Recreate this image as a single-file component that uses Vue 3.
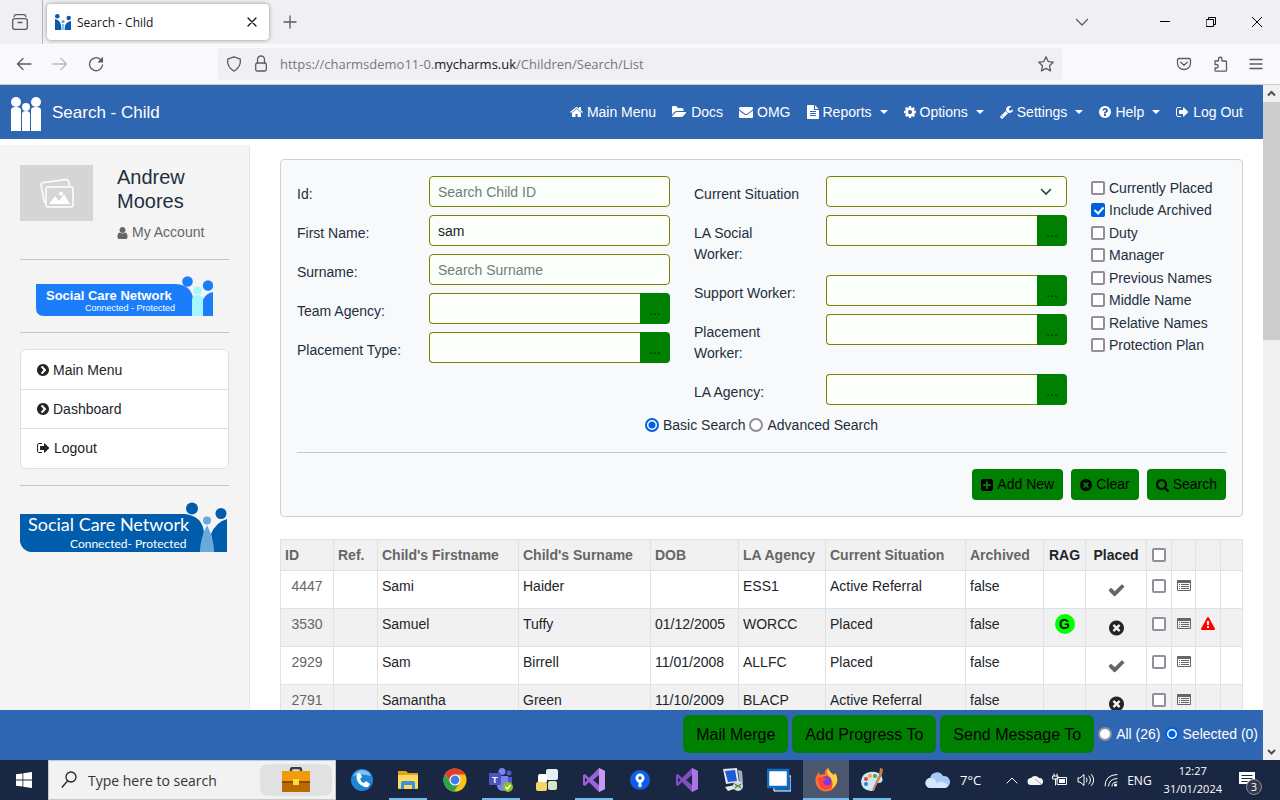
<script setup>
import { h, ref } from 'vue'

const disc = 'm387-226q0 209-103 385.5t-279.5 279.5-385.5 103-385.5-103-279.5-279.5-103-385.5 103-385.5 279.5-279.5 385.5-103 385.5 103 279.5 279.5 103 385.5z'

// name: [left edge, width, path] on a 1792-unit high grid
const glyphs = {
  home: [64, 1664, 'M1472 992v480q0 26-19 45t-45 19h-384v-384h-256v384h-384q-26 0-45-19t-19-45v-480q0-1 .5-3t.5-3l575-474 575 474q1 2 1 6zm223-69l-62 74q-8 9-21 11h-3q-13 0-21-7l-692-577-692 577q-12 8-24 7-13-2-21-11l-62-74q-8-10-7-23.5t11-21.5l719-599q32-26 76-26t76 26l244 204v-195q0-14 9-23t23-9h192q14 0 23 9t9 23v408l219 182q10 8 11 21.5t-7 23.5z'],
  folder: [0, 1920, 'M1815 952q0 31-31 66l-336 396q-43 51-120.5 86.5t-143.5 35.5h-1088q-34 0-60.5-13t-26.5-43q0-31 31-66l336-396q43-51 120.5-86.5t143.5-35.5h1088q34 0 60.5 13t26.5 43zm-343-344v160h-832q-94 0-197 47.5t-164 119.5l-337 396-5 6q0-4-.5-12.5t-.5-12.5v-960q0-92 66-158t158-66h320q92 0 158 66t66 158v32h544q92 0 158 66t66 158z'],
  envelope: [0, 1792, 'M1792 710v794q0 66-47 113t-113 47h-1472q-66 0-113-47t-47-113v-794q44 49 101 87 362 246 497 345 57 42 92.5 65.5t94.5 48 110 24.5h2q51 0 110-24.5t94.5-48 92.5-65.5q170-123 498-345 57-39 100-87zm0-294q0 79-49 151t-122 123q-376 261-468 325-10 7-42.5 31t-54 38.5-52 32.5-57.5 27-50 9h-2q-23 0-50-9t-57.5-27-52-32.5-54-38.5-42.5-31q-91-64-262-182.5t-205-142.5q-62-42-117-115.5t-55-136.5q0-78 41.5-130t118.5-52h1472q65 0 112.5 47t47.5 113z'],
  file: [128, 1536, 'M1596 476q14 14 28 36h-472v-472q22 14 36 28zm-476 164h544v1056q0 40-28 68t-68 28h-1344q-40 0-68-28t-28-68v-1600q0-40 28-68t68-28h800v544q0 40 28 68t68 28zm160 736v-64q0-14-9-23t-23-9h-704q-14 0-23 9t-9 23v64q0 14 9 23t23 9h704q14 0 23-9t9-23zm0-256v-64q0-14-9-23t-23-9h-704q-14 0-23 9t-9 23v64q0 14 9 23t23 9h704q14 0 23-9t9-23zm0-256v-64q0-14-9-23t-23-9h-704q-14 0-23 9t-9 23v64q0 14 9 23t23 9h704q14 0 23-9t9-23z'],
  cog: [128, 1536, 'M1152 896q0-106-75-181t-181-75-181 75-75 181 75 181 181 75 181-75 75-181zm512-109v222q0 12-8 23t-20 13l-185 28q-19 54-39 91 35 50 107 138 10 12 10 25t-9 23q-27 37-99 108t-94 71q-12 0-26-9l-138-108q-44 23-91 38-16 136-29 186-7 28-36 28h-222q-14 0-24.5-8.5t-11.5-21.5l-28-184q-49-16-90-37l-141 107q-10 9-25 9-14 0-25-11-126-114-165-168-7-10-7-23 0-12 8-23 15-21 51-66.5t54-70.5q-27-50-41-99l-183-27q-13-2-21-12.5t-8-23.5v-222q0-12 8-23t19-13l186-28q14-46 39-92-40-57-107-138-10-12-10-24 0-10 9-23 26-36 98.5-107.5t94.5-71.5q13 0 26 10l138 107q44-23 91-38 16-136 29-186 7-28 36-28h222q14 0 24.5 8.5t11.5 21.5l28 184q49 16 90 37l142-107q9-9 24-9 13 0 25 10 129 119 165 170 7 8 7 22 0 12-8 23-15 21-51 66.5t-54 70.5q26 50 41 98l183 28q13 2 21 12.5t8 23.5z'],
  wrench: [64, 1664, 'M448 1472q0-26-19-45t-45-19-45 19-19 45 19 45 45 19 45-19 19-45zm644-420l-682 682q-37 37-90 37-52 0-91-37l-106-108q-38-36-38-90 0-53 38-91l681-681q39 98 114.5 173.5t173.5 114.5zm634-435q0 39-23 106-47 134-164.5 217.5t-258.5 83.5q-185 0-316.5-131.5t-131.5-316.5 131.5-316.5 316.5-131.5q58 0 121.5 16.5t107.5 46.5q16 11 16 28t-16 28l-293 169v224l193 107q5-3 79-48.5t135.5-81 70.5-35.5q15 0 23.5 10t8.5 25z'],
  question: [128, 1536, 'M1024 1376v-192q0-14-9-23t-23-9h-192q-14 0-23 9t-9 23v192q0 14 9 23t23 9h192q14 0 23-9t9-23zm256-672q0-88-55.5-163t-138.5-116-170-41q-243 0-371 213-15 24 8 42l132 100q7 6 19 6 16 0 25-12 53-68 86-92 34-24 86-24 48 0 85.5 26t37.5 59q0 38-20 61t-68 45q-63 28-115.5 86.5t-52.5 125.5v36q0 14 9 23t23 9h192q14 0 23-9t9-23q0-19 21.5-49.5t54.5-49.5q32-18 49-28.5t46-35 44.5-48 28-60.5 12.5-81zm384 192q0 209-103 385.5t-279.5 279.5-385.5 103-385.5-103-279.5-279.5-103-385.5 103-385.5 279.5-279.5 385.5-103 385.5 103 279.5 279.5 103 385.5z'],
  signout: [64, 1664, 'M704 1440q0 4 1 20t.5 26.5-3 23.5-10 19.5-20.5 6.5h-320q-119 0-203.5-84.5t-84.5-203.5v-704q0-119 84.5-203.5t203.5-84.5h320q13 0 22.5 9.5t9.5 22.5q0 4 1 20t.5 26.5-3 23.5-10 19.5-20.5 6.5h-320q-66 0-113 47t-47 113v704q0 66 47 113t113 47h312l11.5 1 11.5 3 8 5.5 7 9 2 13.5zm928-544q0 26-19 45l-544 544q-19 19-45 19t-45-19-19-45v-288h-448q-26 0-45-19t-19-45v-384q0-26 19-45t45-19h448v-288q0-26 19-45t45-19 45 19l544 544q19 19 19 45z'],
  chevron: [128, 1536, 'M845 1395l454-454q19-19 19-45t-19-45l-454-454q-19-19-45-19t-45 19l-102 102q-19 19-19 45t19 45l307 307-307 307q-19 19-19 45t19 45l102 102q19 19 45 19t45-19zm819-499q0 209-103 385.5t-279.5 279.5-385.5 103-385.5-103-279.5-279.5-103-385.5 103-385.5 279.5-279.5 385.5-103 385.5 103 279.5 279.5 103 385.5z'],
  cross: [128, 1536, 'M1277 1122q0-26-19-45l-181-181 181-181q19-19 19-45 0-27-19-46l-90-90q-19-19-46-19-26 0-45 19l-181 181-181-181q-19-19-45-19-27 0-46 19l-90 90q-19 19-19 46 0 26 19 45l181 181-181 181q-19 19-19 45 0 27 19 46l90 90q19 19 46 19 26 0 45-19l181-181 181 181q19 19 45 19 27 0 46-19l90-90q19-19 19-46z' + disc],
  check: [64, 1664, 'M1671 566q0 40-28 68l-724 724-136 136q-28 28-68 28t-68-28l-136-136-362-362q-28-28-28-68t28-68l136-136q28-28 68-28t68 28l294 295 656-657q28-28 68-28t68 28l136 136q28 28 28 68z'],
  search: [64, 1664, 'M1216 832q0-185-131.5-316.5t-316.5-131.5-316.5 131.5-131.5 316.5 131.5 316.5 316.5 131.5 316.5-131.5 131.5-316.5zm512 832q0 52-38 90t-90 38q-54 0-90-38l-343-342q-179 124-399 124-143 0-273.5-55.5t-225-150-150-225-55.5-273.5 55.5-273.5 150-225 225-150 273.5-55.5 273.5 55.5 225 150 150 225 55.5 273.5q0 220-124 399l343 343q37 37 37 90z'],
  plus: [128, 1536, 'M1408 960v-128q0-26-19-45t-45-19h-320v-320q0-26-19-45t-45-19h-128q-26 0-45 19t-19 45v320h-320q-26 0-45 19t-19 45v128q0 26 19 45t45 19h320v320q0 26 19 45t45 19h128q26 0 45-19t19-45v-320h320q26 0 45-19t19-45zm256-544v960q0 119-84.5 203.5t-203.5 84.5h-960q-119 0-203.5-84.5t-84.5-203.5v-960q0-119 84.5-203.5t203.5-84.5h960q119 0 203.5 84.5t84.5 203.5z'],
  user: [192, 1408, 'M1536 1399q0 109-62.5 187t-150.5 78h-854q-88 0-150.5-78t-62.5-187q0-85 8.5-160.5t31.5-152 58.5-131 94-89 134.5-34.5q131 128 313 128t313-128q76 0 134.5 34.5t94 89 58.5 131 31.5 152 8.5 160.5zm-256-887q0 159-112.5 271.5t-271.5 112.5-271.5-112.5-112.5-271.5 112.5-271.5 271.5-112.5 271.5 112.5 112.5 271.5z'],
  warning: [0, 1792, 'M1024 1375v-190q0-14-9.5-23.5t-22.5-9.5h-192q-13 0-22.5 9.5t-9.5 23.5v190q0 14 9.5 23.5t22.5 9.5h192q13 0 22.5-9.5t9.5-23.5zm-2-374l18-459q0-12-10-19-13-11-24-11h-220q-11 0-24 11-10 7-10 21l17 457q0 10 10 16.5t24 6.5h185q14 0 23.5-6.5t10.5-16.5zm-14-934l768 1408q35 63-2 126-17 29-46.5 46t-63.5 17h-1536q-34 0-63.5-17t-46.5-46q-37-63-2-126l768-1408q17-31 47-49t65-18 65 18 47 49z'],
  list: [0, 1792, 'M128 128h1536q128 0 128 128v1152q0 128-128 128h-1536q-128 0-128-128v-1152q0-128 128-128zM128 512v896h1536v-896zM256 640h128v128h-128zM512 640h1024v128h-1024zM256 896h128v128h-128zM512 896h1024v128h-1024zM256 1152h128v128h-128zM512 1152h1024v128h-1024z'],
}

const Icon = (props) => {
  const [x, w, d] = glyphs[props.name]
  const size = props.size || 14
  return h('svg', {
    viewBox: `${x} 0 ${w} 1792`,
    width: Math.round((w / 1792) * size),
    height: size,
    fill: 'currentColor',
    'fill-rule': props.name === 'list' ? 'evenodd' : 'nonzero',
    'aria-hidden': 'true',
  }, [h('path', { d })])
}
Icon.props = ['name', 'size']

const nav = [
  { icon: 'home', text: 'Main Menu' },
  { icon: 'folder', text: 'Docs' },
  { icon: 'envelope', text: 'OMG' },
  { icon: 'file', text: 'Reports', menu: true },
  { icon: 'cog', text: 'Options', menu: true },
  { icon: 'wrench', text: 'Settings', menu: true },
  { icon: 'question', text: 'Help', menu: true },
  { icon: 'signout', text: 'Log Out' },
]

const side = [
  { icon: 'chevron', text: 'Main Menu' },
  { icon: 'chevron', text: 'Dashboard' },
  { icon: 'signout', text: 'Logout' },
]

const leftFields = ref([
  { id: 'child-id', label: 'Id:', type: 'text', hint: 'Search Child ID', value: '' },
  { id: 'first-name', label: 'First Name:', type: 'text', hint: '', value: 'sam' },
  { id: 'surname', label: 'Surname:', type: 'text', hint: 'Search Surname', value: '' },
  { id: 'team-agency', label: 'Team Agency:', type: 'pick', value: '' },
  { id: 'placement-type', label: 'Placement Type:', type: 'pick', value: '' },
])
const rightFields = ref([
  { id: 'situation', label: 'Current Situation', type: 'select', value: '' },
  { id: 'la-social', label: 'LA Social Worker:', type: 'pick', value: '' },
  { id: 'support', label: 'Support Worker:', type: 'pick', value: '' },
  { id: 'placement', label: 'Placement Worker:', type: 'pick', value: '' },
  { id: 'la-agency', label: 'LA Agency:', type: 'pick', value: '' },
])
const columns = [leftFields, rightFields]

const flags = ref([
  { text: 'Currently Placed', on: false },
  { text: 'Include Archived', on: true },
  { text: 'Duty', on: false },
  { text: 'Manager', on: false },
  { text: 'Previous Names', on: false },
  { text: 'Middle Name', on: false },
  { text: 'Relative Names', on: false },
  { text: 'Protection Plan', on: false },
])
const mode = ref('basic')
const scope = ref('selected')

const heads = ['ID', 'Ref.', "Child's Firstname", "Child's Surname", 'DOB', 'LA Agency', 'Current Situation', 'Archived']
const rows = [
  { id: 4447, first: 'Sami', last: 'Haider', dob: '', la: 'ESS1', sit: 'Active Referral', rag: '', placed: true, warn: false },
  { id: 3530, first: 'Samuel', last: 'Tuffy', dob: '01/12/2005', la: 'WORCC', sit: 'Placed', rag: 'G', placed: false, warn: true },
  { id: 2929, first: 'Sam', last: 'Birrell', dob: '11/01/2008', la: 'ALLFC', sit: 'Placed', rag: '', placed: true, warn: false },
  { id: 2791, first: 'Samantha', last: 'Green', dob: '11/10/2009', la: 'BLACP', sit: 'Active Referral', rag: '', placed: false, warn: false },
]
</script>

<template>
  <div class="window">
    <header class="tabs">
      <button class="plain recent" aria-label="Recent browsing">
        <svg width="18" height="18" viewBox="0 0 18 18" class="line"><rect x="1.700" y="5.700" width="14.600" height="10.600" rx="2" /><path d="M3 3.700Q3.500 1.700 5 1.700h8q1.500 0 2 2M7 9.500h4" /></svg>
      </button>
      <div class="tab">
        <svg width="16" height="16" viewBox="0 0 16 16" fill="#0a5cab"><circle cx="2.300" cy="2.300" r="2.300" /><circle cx="13.700" cy="4" r="2.200" /><path d="M0 16V5q5 1 6 6v5zM16 16V7q-5 1-6 5v4z" /><circle cx="8" cy="7.500" r="1.600" fill="#58a6dc" /><path d="M6 16l1-6h2l1 6z" fill="#8cc4ec" /></svg>
        <span class="tab-title">Search - Child</span>
        <button class="plain" aria-label="Close tab"><svg width="10" height="10" viewBox="0 0 10 10" class="line dark"><path d="M1 1l8 8M9 1l-8 8" /></svg></button>
      </div>
      <button class="plain new-tab" aria-label="New tab"><svg width="14" height="14" viewBox="0 0 14 14" class="line"><path d="M7 1v12M1 7h12" /></svg></button>
      <div class="window-buttons">
        <button class="plain" aria-label="List tabs"><svg width="14" height="14" viewBox="0 0 14 14" class="line"><path d="M1.500 4.500L7 10l5.500-5.500" /></svg></button>
        <button class="plain gap" aria-label="Minimise"><svg width="10" height="10" viewBox="0 0 10 10" class="line black"><path d="M0 4.500h10" /></svg></button>
        <button class="plain" aria-label="Restore"><svg width="10" height="10" viewBox="0 0 10 10" class="line black"><path d="M.5 2.500h7v7h-7zM2.500 2.500v-2h7v7h-2" /></svg></button>
        <button class="plain" aria-label="Close window"><svg width="10" height="10" viewBox="0 0 10 10" class="line black"><path d="M0 0l10 10M10 0L0 10" /></svg></button>
      </div>
    </header>

    <div class="toolbar">
      <div class="history">
        <button class="plain" aria-label="Back"><svg width="16" height="16" viewBox="0 0 16 16" class="line"><path d="M15 8H1.500M7 2.500L1.500 8 7 13.500" /></svg></button>
        <button class="plain faded" aria-label="Forward"><svg width="16" height="16" viewBox="0 0 16 16" class="line"><path d="M1 8h13.500M9 2.500L14.500 8 9 13.500" /></svg></button>
        <button class="plain" aria-label="Reload"><svg width="16" height="16" viewBox="0 0 16 16" class="line"><path d="M14.500 9A6.500 6.500 0 1 1 12.500 3.500" /><path d="M15 .8v5.700H9.300z" fill="#5b5b66" stroke="none" /></svg></button>
      </div>
      <div class="address">
        <svg width="16" height="16" viewBox="0 0 16 16" class="line"><path d="M8 .8l6.300 2.400q1 7.800-6.300 12Q.7 11 1.700 3.200z" /></svg>
        <svg width="14" height="18" viewBox="0 0 14 18" class="line"><rect x="1.700" y="8" width="10.600" height="8" rx="1.500" /><path d="M3.500 8V4.500a3.500 3.500 0 0 1 7 0V8" /></svg>
        <span class="url">https://charmsdemo11-0.<b>mycharms.uk</b>/Children/Search/List</span>
        <svg width="16" height="16" viewBox="0 0 16 16" class="line"><path d="M8 .8l2.200 4.800 5 .6-3.700 3.500 1 5.200L8 12.400l-4.500 2.500 1-5.200L.8 6.200l5-.6z" /></svg>
      </div>
      <div class="extras">
        <button class="plain" aria-label="Pocket"><svg width="16" height="16" viewBox="0 0 16 16" class="line"><path d="M3 2.500h10q1.500 0 1.500 1.500v3.500a6.500 6 0 0 1-13 0V4q0-1.500 1.500-1.500zM4.700 6.200L8 9.300l3.300-3.100" /></svg></button>
        <button class="plain" aria-label="Extensions"><svg width="16" height="16" viewBox="0 0 16 16" class="line"><path d="M2 5h3.500V3a1.700 1.700 0 0 1 3.500 0v2h3.500q1 0 1 1v8.500q0 .7-1 .7H3q-1 0-1-.8V12h1.500a1.700 1.700 0 0 0 0-3.500H2z" /></svg></button>
        <button class="plain" aria-label="Menu"><svg width="14" height="14" viewBox="0 0 14 14" class="line"><path d="M1 2.500h12M1 7h12M1 11.500h12" /></svg></button>
      </div>
    </div>

    <div class="viewport">
      <div class="page">
        <nav class="navbar">
          <svg class="brand" width="32" height="36" viewBox="0 0 32 36" fill="#fff"><circle cx="6" cy="6" r="5" /><circle cx="26" cy="6" r="5" /><circle cx="16" cy="11" r="4" /><path d="M1 35V14q0-3 5-3t5 3v21zM21 35V14q0-3 5-3t5 3v21zM12 35V18q0-3 4-3t4 3v17z" /></svg>
          <h1>Search - Child</h1>
          <ul>
            <li v-for="n in nav" :key="n.text">
              <a href="#"><Icon :name="n.icon" /><span>{{ n.text }}</span><i v-if="n.menu" class="caret"></i></a>
            </li>
          </ul>
        </nav>

        <div class="body">
          <aside>
            <div class="profile">
              <svg width="73" height="56" viewBox="0 0 73 56"><rect width="73" height="56" fill="#d6d4d7" /><g fill="none" stroke="#fff" stroke-width="1.500" stroke-linejoin="round"><path d="M24.500 38l-3.500-18.500q0-1.500 1.500-1.800l24-3.200q1.500 0 2 1.500l1 5" /><rect x="26" y="22" width="27" height="20" rx="2" /></g><path d="M29 39l6-8 4 5 5-7 6 10z" fill="#fff" /><circle cx="41" cy="28.500" r="2" fill="#fff" /></svg>
              <div>
                <h2>Andrew Moores</h2>
                <a href="#" class="account"><Icon name="user" /><span>My Account</span></a>
              </div>
            </div>
            <hr />
            <svg class="logo-small" width="177" height="40" viewBox="0 0 177 40">
              <path d="M0 8h140q15 1 17 14v18H8q-8 0-8-8z" fill="#1c7dfb" /><path d="M166 40V25q4-8 11-9v24z" fill="#1c7dfb" /><circle cx="151.500" cy="5.500" r="5.300" fill="#1c7dfb" /><circle cx="172" cy="9.500" r="5.200" fill="#1c7dfb" /><circle cx="161.500" cy="14.500" r="4" fill="#a6f6ff" /><path d="M156 40V24q0-5 5.500-5t5.500 5v16z" fill="#a6f6ff" />
              <text x="10" y="24" class="logo-bold">Social Care Network</text><text x="49" y="35" class="logo-tag">Connected - Protected</text>
            </svg>
            <hr />
            <ul class="side-menu">
              <li v-for="s in side" :key="s.text"><a href="#"><Icon :name="s.icon" /><span>{{ s.text }}</span></a></li>
            </ul>
            <hr />
            <svg class="logo-large" width="209" height="50" viewBox="0 0 209 50">
              <path d="M0 12h165q17 2 19 18l-4 20H10Q2 48 0 40z" fill="#005dab" /><path d="M194 50l-3-18q5-12 16-15v33z" fill="#005dab" /><circle cx="172" cy="6.500" r="6" fill="#005dab" /><circle cx="201" cy="11.500" r="5.500" fill="#005dab" /><circle cx="187" cy="18.500" r="4" fill="#69aadd" /><path d="M187 23q7 14 7 27h-14q0-13 7-27z" fill="#69aadd" />
              <text x="8" y="29" class="logo-light">Social Care Network</text><text x="50" y="46" class="logo-light-tag">Connected- Protected</text>
            </svg>
          </aside>

          <main>
            <form class="panel" @submit.prevent>
              <div class="criteria">
                <div v-for="(col, c) in columns" :key="c">
                  <div v-for="f in col.value" :key="f.id" class="field">
                    <label :for="f.id">{{ f.label }}</label>
                    <div v-if="f.type === 'pick'" class="pick">
                      <input :id="f.id" v-model="f.value" type="text" />
                      <button type="button" :aria-label="'Choose ' + f.label">...</button>
                    </div>
                    <div v-else-if="f.type === 'select'" class="choose">
                      <select :id="f.id" v-model="f.value"><option value=""></option></select>
                      <svg width="12" height="12" viewBox="0 0 12 12" fill="none" stroke="#343a40" stroke-width="1.600" stroke-linecap="round"><path d="M1.500 3.500L6 8l4.500-4.500" /></svg>
                    </div>
                    <input v-else :id="f.id" v-model="f.value" type="text" :placeholder="f.hint" />
                  </div>
                </div>
                <div class="flags">
                  <label v-for="f in flags" :key="f.text" class="option"><input v-model="f.on" type="checkbox" />{{ f.text }}</label>
                </div>
              </div>
              <div class="modes">
                <label class="option"><input v-model="mode" type="radio" name="mode" value="basic" />Basic Search</label>
                <label class="option"><input v-model="mode" type="radio" name="mode" value="advanced" />Advanced Search</label>
              </div>
              <hr />
              <div class="actions">
                <button type="button"><Icon name="plus" />Add New</button>
                <button type="button"><Icon name="cross" />Clear</button>
                <button type="submit"><Icon name="search" />Search</button>
              </div>
            </form>

            <table>
              <colgroup>
                <col class="w53" /><col class="w44" /><col class="w141" /><col class="w132" /><col class="w88" /><col class="w87" /><col /><col class="w78" /><col class="w42" /><col class="w61" /><col class="w25" /><col class="w24" /><col class="w25" /><col class="w22" />
              </colgroup>
              <thead>
                <tr>
                  <th v-for="t in heads" :key="t">{{ t }}</th>
                  <th class="mid strong">RAG</th>
                  <th class="mid strong">Placed</th>
                  <th class="mid"><input type="checkbox" aria-label="Select all" /></th>
                  <th></th><th></th><th></th>
                </tr>
              </thead>
              <tbody>
                <tr v-for="r in rows" :key="r.id">
                  <td class="mid"><a href="#">{{ r.id }}</a></td>
                  <td></td>
                  <td>{{ r.first }}</td>
                  <td>{{ r.last }}</td>
                  <td>{{ r.dob }}</td>
                  <td>{{ r.la }}</td>
                  <td>{{ r.sit }}</td>
                  <td>false</td>
                  <td class="mid"><span v-if="r.rag" class="rag">{{ r.rag }}</span></td>
                  <td class="mid placed"><Icon :name="r.placed ? 'check' : 'cross'" :size="18" :class="{ tick: r.placed }" /></td>
                  <td class="mid"><input type="checkbox" :aria-label="'Select ' + r.id" /></td>
                  <td class="mid"><a href="#" :aria-label="'Details ' + r.id"><Icon name="list" /></a></td>
                  <td class="mid"><Icon v-if="r.warn" name="warning" class="alert" /></td>
                  <td></td>
                </tr>
              </tbody>
            </table>
          </main>
        </div>

        <footer class="bulk">
          <button type="button">Mail Merge</button>
          <button type="button">Add Progress To</button>
          <button type="button">Send Message To</button>
          <label class="option"><input v-model="scope" type="radio" name="scope" value="all" />All (26)</label>
          <label class="option"><input v-model="scope" type="radio" name="scope" value="selected" />Selected (0)</label>
        </footer>
      </div>
      <div class="scrollbar">
        <svg width="17" height="17" viewBox="0 0 17 17" class="arrow"><path d="M5 10.500L8.500 7l3.500 3.500" /></svg>
        <div class="thumb"></div>
        <svg width="17" height="17" viewBox="0 0 17 17" class="arrow"><path d="M5 7l3.500 3.500L12 7" /></svg>
      </div>
    </div>

    <div class="taskbar">
      <button class="plain start" aria-label="Start"><svg width="16" height="16" viewBox="0 0 16 16" fill="#fff"><path d="M0 2.300l6.500-.9v6.200H0zM7.300 1.300L16 0v7.600H7.300zM0 8.400h6.500v6.200L0 13.700zM7.300 8.400H16V16l-8.700-1.300z" /></svg></button>
      <div class="finder">
        <svg width="16" height="18" viewBox="0 0 16 18" fill="none" stroke="#222" stroke-width="1.300"><circle cx="10" cy="6" r="5" /><path d="M6.500 10L.8 16.500" /></svg>
        <input type="text" aria-label="Search Windows" placeholder="Type here to search" />
        <div class="highlight">
          <svg width="30" height="26" viewBox="0 0 30 26"><path d="M10 5V3q0-2 2-2h6q2 0 2 2v2" fill="none" stroke="#3b3b3b" stroke-width="2.500" /><rect x="1" y="4" width="28" height="21" rx="1" fill="#b96a00" /><rect x="1" y="4" width="28" height="12" rx="1" fill="#f29a0a" /><path d="M1 14h28v2H1z" fill="#8d4d00" /><rect x="12" y="12" width="6" height="6" fill="#ffdc3c" /></svg>
        </div>
      </div>
      <div class="apps">
        <button class="plain" aria-label="Phone"><svg viewBox="0 0 24 24"><circle cx="12" cy="12" r="11" fill="#1c86d8" /><path d="M3 8q4-6 9-6 7 0 9 6-9-3-18 0z" fill="#7cc6f5" /><path d="M7 6l3-1 2 4-2 2q1 3 4 4l2-2 4 3-2 3q-3 1-7-2-6-4-4-11z" fill="#fff" /></svg></button>
        <button class="plain open" aria-label="File Explorer"><svg viewBox="0 0 24 24"><path d="M2 3h8l2 2h10v5H2z" fill="#e6a310" /><rect x="2" y="7" width="20" height="14" rx="1" fill="#ffd968" /><path d="M5 21v-6q0-2 2-2h10q2 0 2 2v6h-3v-4H8v4z" fill="#3e93d8" /></svg></button>
        <button class="plain" aria-label="Chrome"><svg viewBox="0 0 24 24"><circle cx="12" cy="12" r="11.500" fill="#fbc116" /><path d="M2 6.200A11.500 11.500 0 0 1 22 6.500H12q-4 0-5.500 6z" fill="#e33b2e" /><path d="M2 6.200A11.500 11.500 0 0 0 11 23.500l5.500-8.500q-7 3-10-2z" fill="#2ba24c" /><circle cx="12" cy="12" r="5.600" fill="#fff" /><circle cx="12" cy="12" r="4.400" fill="#3b7ded" /></svg></button>
        <button class="plain open" aria-label="Teams"><svg viewBox="0 0 24 24"><circle cx="13" cy="3.500" r="3.500" fill="#7b83eb" /><circle cx="20" cy="5" r="2.500" fill="#5059c9" /><path d="M17 9h6v7q0 4-6 4z" fill="#5059c9" /><path d="M8 8h11v9q-1 6-6 6-5-1-5-6z" fill="#7b83eb" /><rect y="5" width="12" height="12" rx="1" fill="#4b53bc" /><text x="3" y="15" class="teams-t">T</text><circle cx="19" cy="19" r="5" fill="#8cc21f" /><path d="M16.500 19l2 2 3-4" fill="none" stroke="#fff" stroke-width="1.500" /></svg></button>
        <button class="plain" aria-label="Blocks"><svg viewBox="0 0 24 24"><rect x="11" y="1" width="12" height="11" rx="2" fill="#e5f0f6" /><rect x="3" y="6" width="9" height="9" rx="2" fill="#fff" /><rect x="1" y="14" width="11" height="9" rx="2" fill="#f6d667" /><rect x="13" y="13" width="9" height="9" rx="2" fill="#d3e6c8" /></svg></button>
        <button class="plain open" aria-label="Visual Studio"><svg viewBox="0 0 24 24"><path d="M17 0l6 3v18l-6 3L7 14l-4 4-2-1V7l2-1 4 4zM17 7l-6 5 6 5zM3 9.500v5L5.500 12z" fill="#9b63d9" fill-rule="evenodd" /><path d="M17 0l6 3v18l-6 3z" fill="#c59bf2" /></svg></button>
        <button class="plain" aria-label="Sourcetree"><svg viewBox="0 0 24 24"><circle cx="12" cy="12" r="10" fill="#0b5fea" /><circle cx="12" cy="10" r="4.500" fill="#fff" /><circle cx="12" cy="10" r="1.700" fill="#0b5fea" /><path d="M10.500 14h3v5h-3z" fill="#fff" /></svg></button>
        <button class="plain" aria-label="Visual Studio Preview"><svg viewBox="0 0 24 24"><path d="M17 0l6 3v18l-6 3L7 14l-4 4-2-1V7l2-1 4 4zM17 7l-6 5 6 5zM3 9.500v5L5.500 12z" fill="#8150be" fill-rule="evenodd" /><path d="M17 0l6 3v18l-6 3z" fill="#a877df" /></svg></button>
        <button class="plain" aria-label="Remote Desktop"><svg viewBox="0 0 24 24"><path d="M2 1l14-1 2 14-13 2z" fill="#dfe5ea" /><path d="M4 3l10-1 2 11-9 1z" fill="#1b5bd6" /><path d="M17 2l4 1 1 12-3 2z" fill="#9fb0bd" /><path d="M4 19l10-2 2 3-9 3z" fill="#e3e7ea" /><circle cx="17" cy="18" r="5" fill="#d6ddd4" /><path d="M14 16l2.500 2-2.500 2M20 16l-2.500 2 2.500 2" fill="none" stroke="#3b8c32" stroke-width="1.300" /></svg></button>
        <button class="plain" aria-label="Remote Window"><svg viewBox="0 0 24 24"><path d="M6 8h18v15H7z" fill="#0a67b9" stroke="#fff" stroke-width="1" /><rect x="1" y="2" width="20" height="17" fill="#fff" stroke="#0f6cc0" stroke-width="2.500" /></svg></button>
        <button class="plain open active" aria-label="Firefox"><svg viewBox="0 0 24 24"><path d="M12 23.500A11 11 0 0 1 2 9q1-3 3-5l1 3q3-1 5-1-1-4 3-6 2 5 6 7l1-2q3 4 2 9-2 9-11 9.500z" fill="#ff7033" /><path d="M14 0q2 5 6 7l1-2q3 4 2 9-2 5-5 6 2-8-3-12-3-3-1-8z" fill="#ffcf3e" /><circle cx="12" cy="13.500" r="5.500" fill="#7d3bd3" /><path d="M4 10q5-2 9 1-3 1-4 3 1 4 6 3 3-1 3-4 2 8-6 9-8-1-8-12z" fill="#ff4343" /></svg></button>
        <button class="plain open" aria-label="Paint"><svg viewBox="0 0 24 24"><path d="M10 4q9-1 12 5 2 6-4 6-4 0-3 3 1 5-4 5Q1 22 1 13q1-8 9-9z" fill="#cfe6f4" /><circle cx="6" cy="11" r="2" fill="#e5423a" /><circle cx="10" cy="8" r="2" fill="#f8a828" /><circle cx="6" cy="16" r="2" fill="#2f7ed8" /><circle cx="15" cy="8" r="2" fill="#47a93c" /><path d="M20 0l3 1-1 6-8 15-2 1 1-3 6-13z" fill="#c98142" /></svg></button>
      </div>
      <div class="tray">
        <svg width="26" height="18" viewBox="0 0 26 18"><path d="M6 17a5 5 0 0 1-1-10 7 7 0 0 1 13-2 6 6 0 0 1 2 12z" fill="#a9c8f4" /><path d="M6 17a5 5 0 0 1-1-10q5 0 7 5 4-4 11 2-1 3-3 3z" fill="#d6e6fb" /></svg>
        <span class="temperature">7°C</span>
        <svg width="12" height="12" viewBox="0 0 12 12" class="line white"><path d="M1 9l5-5 5 5" /></svg>
        <svg width="16" height="12" viewBox="0 0 16 12"><path d="M4 11a3.500 3.500 0 0 1 0-7 5 5 0 0 1 8 0 3.500 3.500 0 0 1 1 7z" fill="#f4f4f4" /><path d="M8 5l6 5" stroke="#aaa" /></svg>
        <svg width="16" height="14" viewBox="0 0 16 14" class="line white"><path d="M5.500 4.500h9v7h-9zM1 3h5v3H1zM2 1v2M5 1v2M3.500 6v6" /><path d="M7 6h6v4H7z" fill="#fff" stroke="none" /></svg>
        <svg width="18" height="14" viewBox="0 0 18 14" class="line white"><path d="M1 5v4h2l4 3.500v-11L3 5zM9.500 5q1.500 2 0 4M12 3q3 4 0 8M14.500 1.500q4.500 5.500 0 11" /></svg>
        <svg width="14" height="14" viewBox="0 0 14 14" class="line white"><path d="M1 13Q1 2 13 1.500M4.500 13Q5 6 13 5.500M8 13q0-4 5-4" /><circle cx="11.500" cy="12" r="1.500" fill="#fff" stroke="none" /></svg>
        <span class="language">ENG</span>
        <span class="clock"><span>12:27</span><span>31/01/2024</span></span>
        <button class="plain notices" aria-label="Notifications">
          <svg width="16" height="16" viewBox="0 0 16 16"><path d="M0 0h16v12h-4v4l-4-4H0z" fill="#fff" /><path d="M2.500 3.500h11M2.500 6.500h11M2.500 9.500h6" stroke="#1a2744" /></svg>
          <span class="badge">3</span>
        </button>
      </div>
    </div>
  </div>
</template>

<style>
body {
  margin: 0;
}
</style>

<style scoped>
* {
  box-sizing: border-box;
}
.window {
  display: flex;
  flex-direction: column;
  height: 100vh;
  overflow: hidden;
  font: 14px/21px "Liberation Sans", Arial, sans-serif;
  color: #212529;
  background: #fff;
}
button, input, select {
  font: inherit;
}
svg {
  flex: none;
}
a {
  color: inherit;
  text-decoration: none;
}
ul {
  list-style: none;
  margin: 0;
  padding: 0;
}
.plain {
  display: flex;
  align-items: center;
  justify-content: center;
  padding: 0;
  border: 0;
  background: none;
}
.line {
  fill: none;
  stroke: #5b5b66;
  stroke-width: 1.3;
  stroke-linecap: round;
  stroke-linejoin: round;
}
.dark { stroke: #15141a; }
.black { stroke: #000; stroke-width: 1; }
.white { stroke: #fff; stroke-width: 1; }

/* browser chrome */
.tabs {
  display: flex;
  align-items: center;
  flex: none;
  height: 44px;
  background: #f0f0f4;
  font-family: "Open Sans", "Noto Sans", sans-serif;
}
.recent {
  width: 43px;
  height: 44px;
  padding-right: 3px;
  border-right: 1px solid #b4b4ba;
}
.tab {
  display: flex;
  align-items: center;
  gap: 6px;
  width: 222px;
  height: 36px;
  margin-left: 4px;
  padding: 0 12px 0 8px;
  border-radius: 4px;
  background: #fff;
  box-shadow: 0 0 4px rgba(0, 0, 0, 0.4);
}
.tab-title {
  flex: 1;
  font-size: 12px;
  color: #15141a;
}
.new-tab { margin-left: 14px; }
.window-buttons {
  display: flex;
  margin-left: auto;
}
.window-buttons button {
  width: 46px;
  height: 44px;
}
.window-buttons .gap { margin-left: 37px; }
.toolbar {
  display: flex;
  align-items: center;
  flex: none;
  height: 41px;
  background: #f9f9fb;
  border-bottom: 1px solid #cccccf;
}
.history {
  display: flex;
  gap: 20px;
  width: 218px;
  padding-left: 16px;
}
.faded { opacity: 0.4; }
.address {
  display: flex;
  align-items: center;
  flex: 1;
  gap: 12px;
  height: 32px;
  padding: 0 8px;
  border-radius: 4px;
  background: #f0f0f4;
}
.url {
  flex: 1;
  font: 13px/20px "Open Sans", "Noto Sans", sans-serif;
  color: #76767e;
}
.url b {
  font-weight: 400;
  color: #15141a;
}
.extras {
  display: flex;
  justify-content: space-between;
  width: 218px;
  padding: 0 17px 0 114px;
}
.viewport {
  display: flex;
  flex: 1;
  min-height: 0;
}
.page {
  display: flex;
  flex-direction: column;
  flex: 1;
  min-width: 0;
}
.scrollbar {
  display: flex;
  flex-direction: column;
  width: 17px;
  background: #f0f0f0;
}
.thumb {
  height: 238px;
  margin-bottom: auto;
  background: #cdcdcd;
}
.arrow {
  fill: none;
  stroke: #505050;
  stroke-width: 2;
}

/* site header */
.navbar {
  display: flex;
  align-items: center;
  flex: none;
  height: 54px;
  padding: 0 20px 0 10px;
  background: #2e66b1;
  color: #fff;
}
.brand { margin-top: 3px; }
h1 {
  margin: 0 0 0 10px;
  font-size: 17px;
  font-weight: 400;
}
.navbar ul {
  display: flex;
  gap: 16px;
  margin-left: auto;
}
.navbar a {
  display: flex;
  align-items: center;
  gap: 4px;
}
.caret {
  margin-left: 4px;
  border: 4px solid transparent;
  border-top-color: #fff;
  border-bottom: 0;
}

/* sidebar */
.body {
  display: flex;
  flex: 1;
  min-height: 0;
  overflow: hidden;
}
aside {
  flex: none;
  width: 250px;
  margin-top: 6px;
  padding: 20px;
  border-right: 1px solid #e7e7e7;
  background: #f4f4f4;
}
.profile {
  display: grid;
  grid-template-columns: 73px 1fr;
  column-gap: 24px;
}
h2 {
  margin: 0 0 9px;
  font-size: 20px;
  line-height: 24px;
  font-weight: 400;
  color: #212f3d;
}
.account {
  display: flex;
  align-items: center;
  gap: 4px;
  color: #666;
}
hr {
  height: 1px;
  margin: 16px 0;
  border: 0;
  background: #bfc5cb;
}
.logo-small, .logo-large { display: block; }
.logo-small { margin: 0 auto; }
.logo-bold {
  font: bold 13px "Liberation Sans", Arial, sans-serif;
  fill: #fff;
}
.logo-tag {
  font: 9px "Liberation Sans", Arial, sans-serif;
  fill: #fff;
}
.logo-light {
  font: 18px Lato, sans-serif;
  fill: #fff;
}
.logo-light-tag {
  font: 12px Lato, sans-serif;
  fill: #fff;
}
.side-menu {
  padding: 1px 0;
  border: 1px solid #dfdfdf;
  border-radius: 6px;
  background: #fff;
}
.side-menu li + li { border-top: 1px solid #dfdfdf; }
.side-menu a {
  display: flex;
  align-items: center;
  gap: 4px;
  height: 38px;
  padding: 0 16px;
}

/* search panel */
main {
  flex: 1;
  min-width: 0;
  padding: 20px 20px 0 30px;
}
.panel {
  padding: 16px;
  border: 1px solid #cfd1d4;
  border-radius: 4px;
  background: #f8f9fb;
  color: #212f3d;
}
.criteria {
  display: grid;
  grid-template-columns: 1fr 1fr 135px;
  column-gap: 24px;
}
.field {
  display: grid;
  grid-template-columns: 132px 1fr;
  align-items: start;
}
.field label { padding: 8px 24px 10px 0; }
.field input, .field select {
  width: 100%;
  min-width: 0;
  height: 31px;
  padding: 4px 8px;
  border: 1px solid #808000;
  border-radius: 4px;
  outline: 0;
  background: #fafffa;
  color: #212529;
}
.field input::placeholder { color: #757b81; }
.pick { display: flex; }
.pick input {
  flex: 1;
  border-right: 0;
  border-radius: 4px 0 0 4px;
}
.pick button {
  flex: none;
  width: 30px;
  padding: 4px 0 0;
  border: 0;
  border-radius: 0 4px 4px 0;
  background: #008000;
  color: #032b03;
}
.choose { position: relative; }
.choose select { appearance: none; }
.choose svg {
  position: absolute;
  top: 10px;
  right: 15px;
  pointer-events: none;
}
.flags {
  display: flex;
  flex-direction: column;
  justify-content: space-between;
  height: 180px;
  padding-top: 1px;
}
.option {
  display: flex;
  align-items: center;
  gap: 4px;
  line-height: 22px;
  white-space: nowrap;
}
input[type="checkbox"], input[type="radio"] {
  position: relative;
  appearance: none;
  flex: none;
  width: 14px;
  height: 14px;
  margin: 0;
  border: 2px solid #8f8f9d;
  border-radius: 2px;
  background: #fff;
}
input[type="radio"] { border-radius: 50%; }
input[type="checkbox"]:checked {
  border-color: #0060df;
  background: #0060df;
}
input[type="checkbox"]:checked::after {
  content: "";
  position: absolute;
  top: 0;
  left: 3px;
  width: 4px;
  height: 7px;
  border: solid #fff;
  border-width: 0 2px 2px 0;
  transform: rotate(42deg);
}
input[type="radio"]:checked {
  border-color: #0060df;
  background: radial-gradient(circle, #0060df 3px, #fff 4px);
}
.modes {
  display: flex;
  justify-content: center;
  gap: 4px;
  padding: 1px 0;
}
.panel hr {
  margin-top: 15px;
  background: #c4c8cc;
}
.actions {
  display: flex;
  justify-content: flex-end;
  gap: 8px;
}
.actions button {
  display: flex;
  align-items: center;
  gap: 4px;
  height: 31px;
  padding: 0 9px;
  border: 0;
  border-radius: 4px;
  background: #008000;
  color: #000;
}

/* results */
table {
  width: 100%;
  margin-top: 22px;
  table-layout: fixed;
  border-collapse: collapse;
}
.w22 { width: 22px; }
.w24 { width: 24px; }
.w25 { width: 25px; }
.w42 { width: 42px; }
.w44 { width: 44px; }
.w53 { width: 53px; }
.w61 { width: 61px; }
.w78 { width: 78px; }
.w87 { width: 87px; }
.w88 { width: 88px; }
.w132 { width: 132px; }
.w141 { width: 141px; }
th, td {
  padding: 5px 4px 4px;
  border: 1px solid #dee2e6;
  text-align: left;
  vertical-align: top;
  white-space: nowrap;
}
th {
  height: 31px;
  color: #666;
}
td { height: 38px; }
thead tr, tbody tr:nth-child(even) { background: #f1f1f1; }
td a { color: #666; }
.mid {
  padding-left: 0;
  padding-right: 0;
  text-align: center;
}
.mid input { vertical-align: -2px; }
.mid svg { vertical-align: -2px; }
.strong { color: #212529; }
.placed { padding-top: 8px; }
.placed svg { vertical-align: middle; }
.tick { color: #666; }
.alert { color: #f00; }
.rag {
  display: inline-block;
  width: 20px;
  border-radius: 50%;
  background: #0f0;
  color: #111;
  font-weight: bold;
  line-height: 20px;
}
.bulk {
  display: flex;
  align-items: center;
  justify-content: flex-end;
  flex: none;
  gap: 4px;
  height: 50px;
  padding: 0 5px 2px 0;
  background: #2e66b1;
  color: #fff;
}
.bulk button {
  height: 38px;
  padding: 0 13px;
  border: 0;
  border-radius: 6px;
  background: #008000;
  color: #000;
  font-size: 16px;
}

/* taskbar */
.taskbar {
  display: flex;
  align-items: center;
  flex: none;
  height: 40px;
  background: #1a2743;
  color: #fff;
  font-family: "Open Sans", "Noto Sans", sans-serif;
}
.start {
  width: 48px;
  height: 40px;
}
.finder {
  display: flex;
  align-items: center;
  width: 288px;
  height: 40px;
  padding: 0 3px 0 12px;
  border: 1px solid #c8c8c8;
  background: #f2f2f2;
}
.finder input {
  flex: 1;
  min-width: 0;
  padding: 0 0 0 11px;
  border: 0;
  outline: 0;
  background: none;
}
.finder input::placeholder { color: #333; }
.highlight {
  display: flex;
  align-items: center;
  justify-content: center;
  width: 72px;
  height: 32px;
  border-radius: 8px;
  background: #e1e1e1;
}
.apps {
  display: flex;
  justify-content: space-between;
  width: 556px;
  margin-left: 3px;
}
.apps button {
  width: 46px;
  height: 40px;
  background: linear-gradient(#76b9ed, #76b9ed) no-repeat center bottom / 0 2px;
}
.apps .open { background-size: 38px 2px; }
.apps .active {
  background-color: #4b566f;
  background-size: 46px 2px;
}
.apps svg {
  width: 24px;
  height: 24px;
}
.teams-t {
  font: bold 9px "Liberation Sans", Arial, sans-serif;
  fill: #fff;
}
.tray {
  display: flex;
  align-items: center;
  gap: 9px;
  margin-left: auto;
  padding-right: 21px;
  font-size: 11px;
}
.temperature {
  margin-right: 16px;
  font-size: 13px;
}
.language { font-size: 12px; }
.clock {
  display: flex;
  flex-direction: column;
  align-items: center;
  margin: 0 4px 0 3px;
  line-height: 18px;
}
.notices {
  position: relative;
  width: 24px;
  height: 40px;
  color: #fff;
}
.badge {
  position: absolute;
  right: -3px;
  bottom: 5px;
  width: 16px;
  border: 1px solid #8a8f98;
  border-radius: 50%;
  background: #333a48;
  font-size: 11px;
  line-height: 14px;
}
</style>
